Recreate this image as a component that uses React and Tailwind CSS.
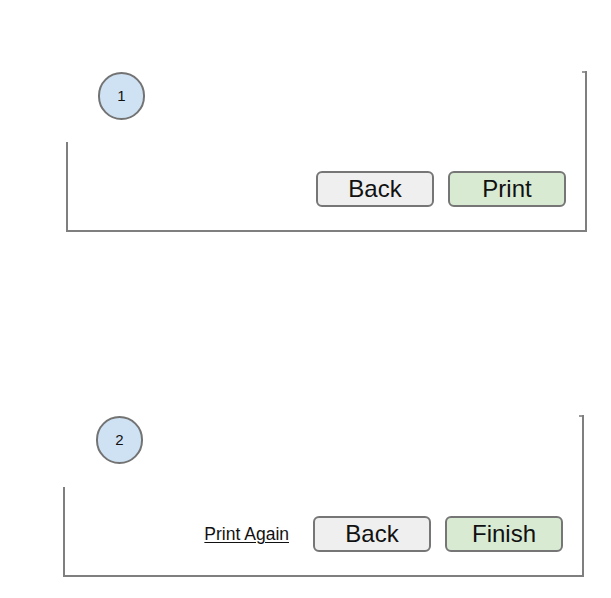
export default function App() {
  const line = "border-[#7f7f7f]";
  const btn =
    "w-[118px] h-[36px] rounded-[6px] border-2 border-[#767676] flex items-center justify-center text-[24px] text-[#111] leading-none";
  return (
    <div className="w-[611px] h-[598px] bg-white font-['Liberation_Sans',Arial,sans-serif] pt-[71px] overflow-hidden">
      {/* Panel 1 */}
      <div className="ml-[66px] w-[521px]">
        <div className={`h-[71px] border-r-2 ${line} flex justify-between items-start`}>
          <div className="ml-[32px] mt-[1px] w-[47px] h-[48px] rounded-full bg-[#cfe2f3] border-2 border-[#737373] flex items-center justify-center text-[15px] text-[#111]">
            1
          </div>
          <div className="w-[3px] h-[2px] bg-[#9a9a9a]" />
        </div>
        <div className={`h-[90px] border-l-2 border-r-2 border-b-2 ${line} flex justify-end items-start pt-[29px] pr-[19px] gap-[14px]`}>
          <div className={`${btn} bg-[#efefef]`}>Back</div>
          <div className={`${btn} bg-[#d9ead3]`}>Print</div>
        </div>
      </div>

      {/* Panel 2 */}
      <div className="ml-[63px] w-[521px] mt-[183px]">
        <div className={`h-[72px] border-r-2 ${line} flex justify-between items-start`}>
          <div className="ml-[33px] mt-[1px] w-[47px] h-[48px] rounded-full bg-[#cfe2f3] border-2 border-[#737373] flex items-center justify-center text-[15px] text-[#111]">
            2
          </div>
          <div className="w-[3px] h-[2px] bg-[#9a9a9a]" />
        </div>
        <div className={`h-[90px] border-l-2 border-r-2 border-b-2 ${line} flex justify-end items-start pt-[29px] pr-[19px]`}>
          <div className="h-[36px] flex items-center mr-[24px] text-[17.5px] text-[#111] underline underline-offset-[2px]">
            Print Again
          </div>
          <div className={`${btn} bg-[#efefef] mr-[14px]`}>Back</div>
          <div className={`${btn} bg-[#d9ead3]`}>Finish</div>
        </div>
      </div>
    </div>
  );
}
